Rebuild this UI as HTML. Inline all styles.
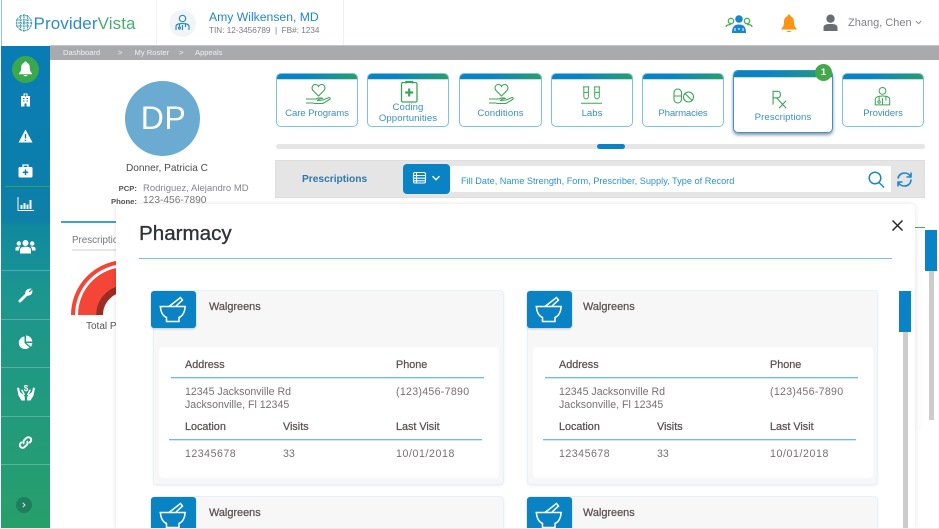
<!DOCTYPE html>
<html><head><meta charset="utf-8"><style>
*{box-sizing:border-box}
html,body{margin:0;padding:0;width:939px;height:529px;overflow:hidden;background:#fff;font-family:"Liberation Sans",sans-serif}
.a,.a *{position:absolute}
.a{left:0;top:0;width:939px;height:529px;overflow:hidden}
.t{white-space:nowrap;line-height:14px}
.tab{background:#fff;border:1px solid #7cc3e2;border-radius:5px;overflow:hidden;box-sizing:border-box}
.tab i{left:0;top:0;right:0;height:5px;background:linear-gradient(90deg,#0a83c6,#0a83c6 35%,#2a9d6c);box-shadow:0 1px 0 #bfe3dc;display:block}
.tab b{left:0;right:0;text-align:center;font-weight:normal;color:#3a8fc4;font-size:9.6px;line-height:10.500px}
.card{width:351px;height:195px;background:#f7f7f7;border:1px solid #e8f1f7;border-radius:4px;box-shadow:0 1px 2px rgba(150,180,200,.2)}
.ib{left:-3px;top:0;width:45px;height:37px;background:#0a83c4;border-radius:3px;box-shadow:0 1px 2px rgba(0,0,0,.2)}
.r .ib{left:-1px}
.in{left:5px;top:56px;width:340px;height:131px;background:#fff;border-radius:4px}
.h{font-size:10.800px;color:#5c5052;line-height:14px;white-space:nowrap;-webkit-text-stroke:.25px #5c5052}
.v{font-size:10.600px;color:#7a6f71;line-height:13px;white-space:nowrap}
.w{left:55px;top:9px;font-size:10.900px;color:#5c5052;-webkit-text-stroke:.25px #5c5052}
.ln{height:1px;background-color:#6fbcec;box-shadow:0 1px 0 rgba(111,188,236,.35)}
</style></head><body><div class="a">

<!-- header -->
<div style="left:1px;top:0;width:1px;height:46px;background:#8fc5e4"></div>
<div style="left:156px;top:0;width:1px;height:45px;background:#f0f0f0"></div>
<div style="left:343px;top:0;width:1px;height:45px;background:#f0f0f0"></div>
<svg style="left:15px;top:13px" width="18" height="20" viewBox="0 0 18 20" fill="none" stroke-width="1.1" stroke-dasharray="1.6 .7"><circle cx="9" cy="10" r="7.6" stroke="#4aa3a0"/><path d="M1 7H17M1 13H17" stroke="#2a8fc0"/><path d="M5.500 2V18M12.500 2V18" stroke="#3fa86c"/><path d="M9 1V19M1 10H17" stroke="#1e7fb8"/></svg>
<div class="t" style="left:33.500px;top:13px;font-size:17px;line-height:22px;color:#2b8ccb;letter-spacing:.1px">Provider<span style="position:static;color:#46ad6d">Vista</span></div>
<div style="left:169px;top:10px;width:27px;height:27px;border-radius:50%;background:#f3f4f5"></div>
<svg style="left:174px;top:14px" width="17" height="18" viewBox="0 0 17 18" fill="none" stroke="#2a8ccb" stroke-width="1.2"><circle cx="8.500" cy="4.500" r="3.200"/><path d="M2 16V12.500C2 10.500 4 9.500 8.500 9.500S15 10.500 15 12.500V16M5.500 10V13M11.500 10V13M8.500 11V16"/><circle cx="5.500" cy="14" r="1"/></svg>
<div class="t" style="left:209px;top:10px;font-size:12.200px;color:#1f88cc">Amy Wilkensen, MD</div>
<div class="t" style="left:209px;top:25px;font-size:8.200px;color:#777b80;line-height:12px">TIN: 12-3456789 &nbsp;|&nbsp; FB#: 1234</div>

<svg style="left:725px;top:14px" width="28" height="20" viewBox="0 0 28 20" fill="none"><circle cx="6" cy="7" r="2.700" stroke="#49b14d" stroke-width="1.300"/><circle cx="22" cy="7" r="2.700" stroke="#49b14d" stroke-width="1.300"/><path d="M1 13C1 11 3 10.500 6 10.500M27 13C27 11 25 10.500 22 10.500" stroke="#49b14d" stroke-width="1.300"/><circle cx="14" cy="5" r="3.800" fill="#1886cc"/><path d="M7 19C7 12 10 10.500 14 10.500S21 12 21 19Z" fill="#1886cc"/><path d="M10 14V17M18 14V17M13 15H15" stroke="#fff"/></svg>
<svg style="left:780px;top:14px" width="18" height="19" viewBox="0 0 18 19"><path d="M9 0.500C10.300 0.500 10.600 1.500 10.600 2.200C13 3 14 5 14 8C14 11.500 15 13 16.500 14.500V15.500H1.500V14.500C3 13 4 11.500 4 8C4 5 5 3 7.400 2.200C7.400 1.500 7.700 .5 9 .5Z" fill="#fb9314"/><path d="M6.500 17H11.500C11 18.500 7 18.500 6.500 17Z" fill="#fb9314"/></svg>
<svg style="left:823px;top:14px" width="15" height="18" viewBox="0 0 15 18" fill="#6b6d72"><circle cx="7.500" cy="4.700" r="4.200"/><path d="M.5 17V13.500C.5 10.800 3 10 7.500 10S14.500 10.800 14.500 13.500V17Z"/></svg>
<div class="t" style="left:848px;top:16px;font-size:11px;color:#7f8187">Zhang, Chen</div>
<svg style="left:915px;top:20px" width="7" height="5" viewBox="0 0 7 5" fill="none" stroke="#8a8c90"><path d="M.8 1L3.500 3.700L6.200 1"/></svg>

<!-- breadcrumb -->
<div style="left:50px;top:45px;width:889px;height:15px;background:#a9aaae;border-top:1px solid #c4c5c8"></div>
<div class="t" style="left:63px;top:46px;font-size:7.600px;color:#f0f0f0">Dashboard</div>
<div class="t" style="left:118px;top:46px;font-size:7.600px;color:#f0f0f0">&gt;</div>
<div class="t" style="left:134.500px;top:46px;font-size:7.600px;color:#f0f0f0">My Roster</div>
<div class="t" style="left:179px;top:46px;font-size:7.600px;color:#f0f0f0">&gt;</div>
<div class="t" style="left:195px;top:46px;font-size:7.600px;color:#f0f0f0">Appeals</div>

<!-- sidebar -->
<div style="left:1px;top:46px;width:49px;height:482px;background:linear-gradient(180deg,#0a7cb5 0%,#0d7fa8 35%,#1c9590 50%,#279f6a 100%)"></div>
<div style="left:1px;top:224px;width:49px;height:46px;background:rgba(20,150,150,.35)"></div>
<div style="left:5px;top:186px;width:45px;height:1px;background:#33a35c"></div>
<div style="left:1px;top:270px;width:49px;height:1px;background:rgba(255,255,255,.25)"></div>
<div style="left:1px;top:319px;width:49px;height:1px;background:rgba(255,255,255,.25)"></div>
<div style="left:1px;top:367px;width:49px;height:1px;background:rgba(255,255,255,.25)"></div>
<div style="left:1px;top:416px;width:49px;height:1px;background:rgba(255,255,255,.25)"></div>
<div style="left:1px;top:464px;width:49px;height:1px;background:rgba(255,255,255,.25)"></div>
<div style="left:12px;top:56px;width:27px;height:27px;border-radius:50%;background:#3aa84c"></div>
<svg style="left:18px;top:61px" width="15" height="16" viewBox="0 0 15 16" fill="#fff"><path d="M7.500 .5C8.500 .5 8.800 1.200 8.800 1.800C11 2.500 11.800 4.300 11.800 7C11.800 9.800 12.800 11 14 12.300V13.200H1V12.300C2.200 11 3.200 9.800 3.200 7C3.200 4.300 4 2.500 6.200 1.800C6.200 1.200 6.500 .5 7.500 .5Z"/><path d="M5.500 14H9.500C9.200 15.700 5.800 15.700 5.500 14Z"/></svg>
<svg style="left:19px;top:93px" width="13" height="14" viewBox="0 0 13 14"><path d="M2 3H4.500V.5H8.500V3H11V13.500H2Z" fill="#fff"/><path d="M6.500 1.200V3.500M5.400 2.300H7.600M4 5.500H5.500M7.500 5.500H9M4 8H5.500M7.500 8H9" stroke="#0d7cad"/><rect x="5.500" y="10.500" width="2" height="3" fill="#0d7cad"/></svg>
<svg style="left:18px;top:129px" width="15" height="14" viewBox="0 0 15 14"><path d="M7.500 .5L14.500 13.500H.5Z" fill="#fff"/><path d="M7.500 5V9.500M7.500 10.800V12" stroke="#0d7cad" stroke-width="1.400"/></svg>
<svg style="left:18px;top:164px" width="15" height="14" viewBox="0 0 15 14"><path d="M5 3V1H10V3" stroke="#fff" fill="none" stroke-width="1.300"/><rect x=".5" y="3" width="14" height="10.500" rx="1.500" fill="#fff"/><path d="M7.500 5.500V11M4.800 8.200H10.200" stroke="#0d7cad" stroke-width="1.500"/></svg>
<svg style="left:17px;top:197px" width="17" height="14" viewBox="0 0 17 14" fill="#fff"><path d="M.5 0H1.500V13H17V14H.5Z"/><rect x="3.500" y="8" width="2" height="4"/><rect x="6.500" y="6" width="2" height="6"/><rect x="9.500" y="7.500" width="2" height="4.500"/><rect x="12.500" y="3" width="2" height="9"/></svg>
<svg style="left:15px;top:239px" width="21" height="15" viewBox="0 0 21 15" fill="#fff"><circle cx="10.500" cy="4" r="3"/><circle cx="3.800" cy="4.500" r="2.200"/><circle cx="17.200" cy="4.500" r="2.200"/><path d="M5 14.500V11C5 8.800 7 7.800 10.500 7.800S16 8.800 16 11V14.500Z"/><path d="M.5 11.500V9.500C.5 8 2 7.500 5.500 7.500C4.500 8.500 4 9.500 4 11.500ZM20.500 11.500V9.500C20.500 8 19 7.500 15.500 7.500C16.500 8.500 17 9.500 17 11.500Z"/></svg>
<svg style="left:18px;top:287px" width="15" height="16" viewBox="0 0 15 16" fill="none" stroke="#fff"><path d="M2 14L8 8" stroke-width="3" stroke-linecap="round"/><path d="M8 8C6.800 4.500 9 1.800 12.800 2L10.300 4.500L11.500 6L14 3.600C14.200 7 11.500 9.300 8 8Z" fill="#fff" stroke-width=".8"/></svg>
<svg style="left:18px;top:335px" width="15" height="15" viewBox="0 0 15 15" fill="#fff"><path d="M6.500 1.500V8L11.500 12.500C8 15.500 1 14 .8 8C.8 4.500 3.500 1.500 6.500 1.500Z"/><path d="M8 .5C11.300 .5 14 3 14.300 6.500H8Z"/><path d="M8.500 8H14.300C14.300 9.500 13.700 10.800 12.800 11.800Z"/></svg>
<svg style="left:17px;top:384px" width="18" height="17" viewBox="0 0 18 17" fill="#fff"><path d="M0 4L2 3.500L3 8L6 10.500L7.800 12.800V16.500H4.500L1.500 11.500Z"/><path d="M18 4L16 3.500L15 8L12 10.500L10.200 12.800V16.500H13.500L16.500 11.500Z"/><path d="M4 6L5.500 5.500L8 10.500L6.800 11.500ZM14 6L12.500 5.500L10 10.500L11.200 11.500Z"/><text x="9" y="7" text-anchor="middle" font-size="8" font-weight="bold" fill="#fff" font-family="Liberation Sans">$</text></svg>
<svg style="left:18px;top:435px" width="15" height="15" viewBox="0 0 15 15" fill="none" stroke="#fff" stroke-width="2"><path d="M6.200 8.800C5 7.600 5.200 6.200 6.200 5.200L8.200 3.200C9.500 1.900 11.200 1.900 12.400 3C13.500 4.200 13.400 5.800 12.300 6.900L11.200 8"/><path d="M8.800 6.200C10 7.400 9.800 8.800 8.800 9.800L6.800 11.800C5.500 13.100 3.800 13.100 2.600 12C1.500 10.800 1.600 9.200 2.700 8.100L3.800 7"/></svg>
<div style="left:16px;top:497px;width:16px;height:16px;border-radius:50%;background:#1d7f60"></div>
<svg style="left:21px;top:502px" width="6" height="6" viewBox="0 0 6 6" fill="none" stroke="#dfeee8" stroke-width="1"><path d="M1.800 .8L4 3L1.800 5.200"/></svg>

<!-- patient -->
<div style="left:125px;top:81px;width:75px;height:75px;border-radius:50%;background:#6babd1"></div>
<div class="t" style="left:126px;top:99px;width:75px;text-align:center;font-size:32px;line-height:38px;color:#fff;letter-spacing:.5px">DP</div>
<div class="t" style="left:126px;top:162px;font-size:10.100px;color:#4c4c50">Donner, Patricia C</div>
<div class="t" style="left:101px;top:182px;width:36px;text-align:right;font-size:7.700px;font-weight:bold;color:#55565a">PCP:</div>
<div class="t" style="left:101px;top:195px;width:36px;text-align:right;font-size:7.700px;font-weight:bold;color:#55565a">Phone:</div>
<div class="t" style="left:143px;top:182px;font-size:9.500px;color:#85868a">Rodriguez, Alejandro MD</div>
<div class="t" style="left:143px;top:194px;font-size:10.200px;color:#77787c">123-456-7890</div>

<div style="left:61px;top:221px;width:60px;height:2px;background:#3f9fd6"></div>
<div class="t" style="left:72px;top:234px;font-size:9.800px;color:#77787c">Prescriptions</div>
<div style="left:72px;top:249px;width:50px;height:2px;background:#e6e6e6"></div>
<svg style="left:60px;top:250px" width="80" height="70" viewBox="0 0 80 70" fill="none"><path d="M13 65A53 53 0 0 1 66 12" stroke="#f44536" stroke-width="4"/><path d="M27 65A39 39 0 0 1 66 26" stroke="#f44536" stroke-width="18"/><path d="M39.500 65A26.500 26.500 0 0 1 66 38.500" stroke="#9f2a22" stroke-width="7"/></svg>
<div class="t" style="left:86px;top:320px;font-size:10px;color:#55565a">Total Prescriptions</div>

<!-- tabs -->
<div class="tab" style="left:276px;top:73px;width:82px;height:54px"><i></i>
<svg style="left:27px;top:5px" width="28" height="28" viewBox="0 0 28 28" fill="none" stroke="#3aa655" stroke-width="1.100"><path d="M14.500 17L9 11.500C7 9 8.500 5.500 11.300 5.500C13 5.500 14 6.500 14.500 7.500C15 6.500 16 5.500 17.700 5.500C20.500 5.500 22 9 20 11.500Z"/><path d="M2 20H12C14 18.500 16 18.500 19 19.500C16 19.500 14 20.500 13.500 21.500L19 21L25 18.500C26.500 18.500 26.500 20 25.500 20.500L19 24.500H9.500M2 24H9.500"/></svg>
<b style="top:35px;letter-spacing:-.1px">Care Programs</b></div>
<div class="tab" style="left:367px;top:73px;width:82px;height:54px"><i></i>
<svg style="left:32px;top:6px" width="19" height="23" viewBox="0 0 19 23" fill="none" stroke="#3aa655" stroke-width="1.300"><rect x="1.500" y="2.500" width="15.500" height="19.500" rx="1.500"/><path d="M6 3.500V1.500H12.500V3.500"/><path d="M9.200 8.500V16.500M5.200 12.500H13.200" stroke-width="2.200"/></svg>
<b style="top:29px;letter-spacing:.1px">Coding<br>Opportunities</b></div>
<div class="tab" style="left:459px;top:73px;width:83px;height:54px"><i></i>
<svg style="left:27px;top:5px" width="28" height="28" viewBox="0 0 28 28" fill="none" stroke="#3aa655" stroke-width="1.100"><path d="M14.500 17L9 11.500C7 9 8.500 5.500 11.300 5.500C13 5.500 14 6.500 14.500 7.500C15 6.500 16 5.500 17.700 5.500C20.500 5.500 22 9 20 11.500Z"/><path d="M2 20H12C14 18.500 16 18.500 19 19.500C16 19.500 14 20.500 13.500 21.500L19 21L25 18.500C26.500 18.500 26.500 20 25.500 20.500L19 24.500H9.500M2 24H9.500"/></svg>
<b style="top:35px;letter-spacing:.1px">Conditions</b></div>
<div class="tab" style="left:551px;top:73px;width:82px;height:54px"><i></i>
<svg style="left:29px;top:12px" width="22" height="20" viewBox="0 0 24 22" fill="none" stroke="#3aa655" stroke-width="1.100"><path d="M2 1H9M3 1V11.500C3 15 8 15 8 11.500V1M3 7H8M14 1H21M15 1V11.500C15 15 20 15 20 11.500V1M15 7H20M0 19H23"/></svg>
<b style="top:35px">Labs</b></div>
<div class="tab" style="left:642px;top:73px;width:82px;height:54px"><i></i>
<svg style="left:30px;top:14px" width="22" height="17" viewBox="0 0 22 17" fill="none" stroke="#3aa655" stroke-width="1.100"><rect x="1" y="1" width="7.500" height="14" rx="3.700"/><path d="M1 8H8.500"/><circle cx="15.500" cy="9" r="5"/><path d="M12 5.500L19 12.500"/></svg>
<b style="top:35px;letter-spacing:-.15px">Pharmacies</b></div>
<div style="left:733px;top:70px;width:100px;height:63px;border-radius:5px;box-shadow:0 2px 3px rgba(40,60,80,.55)"></div>
<div class="tab" style="left:733px;top:70px;width:100px;height:63px;border-color:#3a94c6"><i style="height:6px"></i>
<svg style="left:37px;top:19px" width="18" height="19" viewBox="0 0 20 22" fill="none" stroke="#3aa655" stroke-width="1.300"><path d="M2 17V1.500H7.500C11.500 1.500 11.500 9 7.500 9H2M6 9L17 21M17 12.500L9 21"/></svg>
<b style="top:42px;letter-spacing:.1px">Prescriptions</b></div>
<div style="left:815px;top:64px;width:17px;height:17px;border-radius:50%;background:#43a84c;color:#fff;font-size:9.500px;font-weight:bold;text-align:center;line-height:17px">1</div>
<div class="tab" style="left:842px;top:73px;width:82px;height:54px"><i></i>
<svg style="left:31px;top:12px" width="17" height="20" viewBox="0 0 20 23" fill="none" stroke="#3aa655" stroke-width="1.200"><circle cx="10" cy="5.500" r="4"/><path d="M1.500 22V16C1.500 12.800 4 11.500 10 11.500S18.500 12.800 18.500 16V22ZM6 12V17M14 12V17M10 14V22"/><circle cx="6" cy="18.500" r="1.400"/></svg>
<b style="top:35px;letter-spacing:-.1px">Providers</b></div>

<div style="left:276px;top:144px;width:649px;height:5px;background:#e6e6e6;border-radius:3px"></div>
<div style="left:597px;top:144px;width:28px;height:5px;background:#0a83c6;border-radius:3px"></div>

<!-- search bar -->
<div style="left:275px;top:160px;width:650px;height:38px;background:#e5e5e5;border:1px solid #dedede"></div>
<div class="t" style="left:302px;top:173px;font-size:10.200px;font-weight:bold;color:#2c78ad">Prescriptions</div>
<div style="left:450px;top:166px;width:441px;height:26px;background:#fff"></div>
<div style="left:403px;top:164px;width:47px;height:30px;background:#0a83c4;border-radius:4px"></div>
<svg style="left:412px;top:171px" width="30" height="15" viewBox="0 0 30 15" fill="none" stroke="#fff" stroke-width="1.100"><rect x="1.500" y="1.500" width="12" height="10.500" rx="1.500"/><path d="M1.500 4.500H13.500M1.500 7.200H13.500M1.500 9.800H13.500M4.500 1.500V12"/><path d="M20.500 5.300L24 8.800L27.500 5.300" stroke-width="1.400"/></svg>
<div class="t" style="left:461px;top:174px;font-size:9.200px;color:#2a93d0">Fill Date, Name Strength, Form, Prescriber, Supply, Type of Record</div>
<svg style="left:867px;top:171px" width="18" height="18" viewBox="0 0 18 18" fill="none" stroke="#1a86c8" stroke-width="1.500"><circle cx="8" cy="7" r="5.800"/><path d="M12 11.500L17 16.500"/></svg>
<svg style="left:896px;top:171px" width="17" height="17" viewBox="0 0 17 17" fill="none" stroke="#1a86c8" stroke-width="1.600"><path d="M2 7.500C2.500 4 5.500 2 8.500 2C11 2 13 3.200 14.300 5"/><path d="M15 8.500C15 12.500 12 15 8.500 15C6 15 4 14 2.700 12"/><path d="M15 1.500V6H10.500M2 15.500V11H6.500" stroke-linejoin="round"/></svg>

<!-- right background scroll -->
<div style="left:915px;top:227px;width:10px;height:1px;background:#3bb54a"></div>
<div style="left:925px;top:230px;width:12px;height:41px;background:#0a83c6"></div>
<div style="left:929px;top:271px;width:5px;height:149px;background:#ccc"></div>
<div style="left:915px;top:230px;width:8px;height:200px;background:#fdfdfd"></div>

<!-- modal -->
<div style="left:116px;top:204px;width:799px;height:325px;background:#fff;border-radius:4px 4px 0 0;box-shadow:0 0 5px rgba(0,0,0,.12);overflow:hidden">
 <div class="t" style="left:23px;top:17px;font-size:20.600px;line-height:26px;color:#2f3237;-webkit-text-stroke:.35px #2f3237">Pharmacy</div>
 <div style="left:23px;top:54px;width:753px;height:1px;background:#79bfe8"></div>
 <svg style="left:775px;top:15px" width="13" height="13" viewBox="0 0 13 13" stroke="#26282c" stroke-width="1.500"><path d="M1.500 1.500L11.500 11.500M11.500 1.500L1.500 11.500"/></svg>
 <div style="left:787px;top:128px;width:5px;height:197px;background:#ccc"></div>
 <div style="left:783px;top:87px;width:12px;height:41px;background:#0a83c6"></div>

 <!-- card 1 -->
 <div class="card" style="left:37px;top:86px">
  <div class="ib"><svg style="left:0;top:0" width="45" height="37" viewBox="0 0 45 37" fill="none" stroke="#fff" stroke-width="1.500"><path d="M8.500 15.500H35M9.500 15.500C9.500 21 12 25 15.500 26.500V30.500H28V26.500C31.500 25 34 21 34 15.500"/><path d="M18 15.500L29.500 6.500L31.500 9L25 15"/></svg></div>
  <div class="t w">Walgreens</div>
  <div class="in"></div>
  <div class="h" style="left:31px;top:67px">Address</div><div class="h" style="left:242px;top:67px">Phone</div>
  <div class="ln" style="left:17px;top:86px;width:313px"></div>
  <div class="v" style="left:31px;top:95px">12345 Jacksonville Rd<br>Jacksonville, Fl 12345</div>
  <div class="v" style="left:242px;top:95px;letter-spacing:.3px">(123)456-7890</div>
  <div class="h" style="left:31px;top:129px">Location</div><div class="h" style="left:129px;top:129px">Visits</div><div class="h" style="left:242px;top:129px">Last Visit</div>
  <div class="ln" style="left:15px;top:148px;width:313px"></div>
  <div class="v" style="left:31px;top:157px;letter-spacing:.5px">12345678</div><div class="v" style="left:129px;top:157px">33</div><div class="v" style="left:242px;top:157px;letter-spacing:.6px">10/01/2018</div>
 </div>
 <!-- card 2 -->
 <div class="card r" style="left:411px;top:86px">
  <div class="ib"><svg style="left:0;top:0" width="45" height="37" viewBox="0 0 45 37" fill="none" stroke="#fff" stroke-width="1.500"><path d="M8.500 15.500H35M9.500 15.500C9.500 21 12 25 15.500 26.500V30.500H28V26.500C31.500 25 34 21 34 15.500"/><path d="M18 15.500L29.500 6.500L31.500 9L25 15"/></svg></div>
  <div class="t w">Walgreens</div>
  <div class="in"></div>
  <div class="h" style="left:31px;top:67px">Address</div><div class="h" style="left:242px;top:67px">Phone</div>
  <div class="ln" style="left:17px;top:86px;width:313px"></div>
  <div class="v" style="left:31px;top:95px">12345 Jacksonville Rd<br>Jacksonville, Fl 12345</div>
  <div class="v" style="left:242px;top:95px;letter-spacing:.3px">(123)456-7890</div>
  <div class="h" style="left:31px;top:129px">Location</div><div class="h" style="left:129px;top:129px">Visits</div><div class="h" style="left:242px;top:129px">Last Visit</div>
  <div class="ln" style="left:15px;top:148px;width:313px"></div>
  <div class="v" style="left:31px;top:157px;letter-spacing:.5px">12345678</div><div class="v" style="left:129px;top:157px">33</div><div class="v" style="left:242px;top:157px;letter-spacing:.6px">10/01/2018</div>
 </div>
 <!-- card 3 -->
 <div class="card" style="left:37px;top:292px;height:33px;border-bottom:0;border-radius:4px 4px 0 0">
  <div class="ib"><svg style="left:0;top:0" width="45" height="37" viewBox="0 0 45 37" fill="none" stroke="#fff" stroke-width="1.500"><path d="M8.500 15.500H35M9.500 15.500C9.500 21 12 25 15.500 26.500V30.500H28V26.500C31.500 25 34 21 34 15.500"/><path d="M18 15.500L29.500 6.500L31.500 9L25 15"/></svg></div>
  <div class="t w">Walgreens</div>
 </div>
 <!-- card 4 -->
 <div class="card r" style="left:411px;top:292px;height:33px;border-bottom:0;border-radius:4px 4px 0 0">
  <div class="ib"><svg style="left:0;top:0" width="45" height="37" viewBox="0 0 45 37" fill="none" stroke="#fff" stroke-width="1.500"><path d="M8.500 15.500H35M9.500 15.500C9.500 21 12 25 15.500 26.500V30.500H28V26.500C31.500 25 34 21 34 15.500"/><path d="M18 15.500L29.500 6.500L31.500 9L25 15"/></svg></div>
  <div class="t w">Walgreens</div>
 </div>
</div>
<div style="left:0;top:528px;width:939px;height:1px;background:#e9e9e9"></div>
</div></body></html>
